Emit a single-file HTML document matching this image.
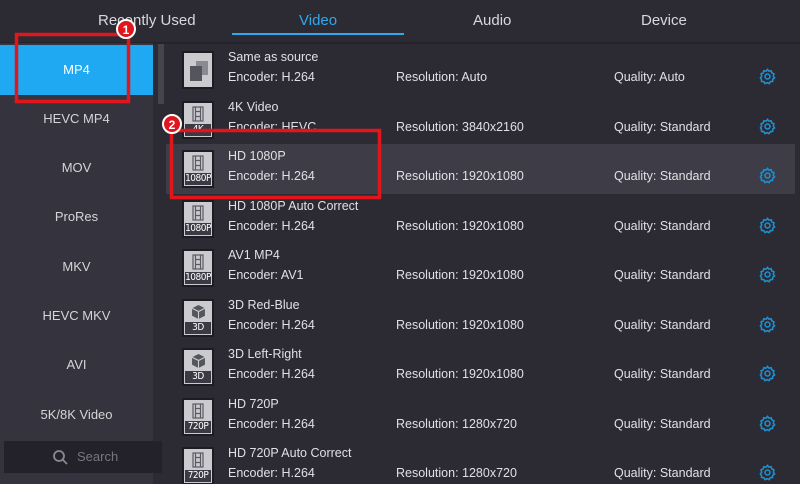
<!DOCTYPE html><html><head><style>
*{margin:0;padding:0;box-sizing:border-box}
html,body{width:800px;height:484px;overflow:hidden}
body{background:#2c2b34;font-family:"Liberation Sans","DejaVu Sans",sans-serif;color:#dcdce0;position:relative}
.tab{position:absolute;top:12px;font-size:15px;color:#d8d8dc}
.side{position:absolute;left:0;top:43px;width:153px;height:441px;background:#35343e}
.si{position:absolute;left:0;width:153px;height:50px;line-height:50px;text-align:center;font-size:13px;color:#d4d4d8}
.row{position:absolute;left:166px;width:629px;height:49.5px}
.ic{position:absolute;left:16px;top:6px;width:32px;height:38px;background:#cbcbcf;border:2px solid #1c1c22}
.lb{position:absolute;left:1px;right:1px;bottom:1px;height:12px;background:#3b3a44;color:#fff;font-size:10px;line-height:12px;text-align:center;font-family:"DejaVu Sans Condensed","Liberation Sans",sans-serif;letter-spacing:-0.5px}
.t{position:absolute;font-size:12.5px;color:#e0e0e4}
.g{position:absolute;left:593px}
</style></head><body>
<div class="tab" style="left:98px">Recently Used</div>
<div class="tab" style="left:299px;color:#2fa8ec">Video</div>
<div style="position:absolute;left:232px;top:33px;width:172px;height:2px;background:#2fa8ec"></div>
<div class="tab" style="left:473px">Audio</div>
<div class="tab" style="left:641px">Device</div>
<div style="position:absolute;left:0;top:42px;width:800px;height:2px;background:#24232a"></div>
<div class="side">
<div class="si" style="top:2px;background:#1fa9f2;color:#fff">MP4</div>
<div class="si" style="top:51px">HEVC MP4</div>
<div class="si" style="top:100px">MOV</div>
<div class="si" style="top:149px">ProRes</div>
<div class="si" style="top:199px">MKV</div>
<div class="si" style="top:248px">HEVC MKV</div>
<div class="si" style="top:297px">AVI</div>
<div class="si" style="top:347px">5K/8K Video</div>
<div style="position:absolute;left:4px;top:398px;width:158px;height:32px;background:#23222a;color:#77767e;font-size:13px;line-height:32px"><svg style="position:absolute;left:48px;top:8px" width="16" height="16" viewBox="0 0 16 16" fill="none" stroke="#8a8990" stroke-width="1.8"><circle cx="7" cy="7" r="5"/><path d="M11 11l4 4"/></svg><span style="position:absolute;left:73px">Search</span></div>
</div>
<div style="position:absolute;left:158px;top:44px;width:6px;height:60px;background:#45444d"></div>
<div id="rows"></div>
<svg style="position:absolute;left:0;top:0" width="800" height="484">
<rect x="16.5" y="34.5" width="112" height="67" fill="none" stroke="#e0161c" stroke-width="3.5"/>
<rect x="171.5" y="130.5" width="208" height="67" fill="none" stroke="#e0161c" stroke-width="3.5"/>
<circle cx="126" cy="29" r="9" fill="#e0161c" stroke="#fff" stroke-width="2"/>
<text x="126" y="34" fill="#fff" font-size="12" font-weight="bold" text-anchor="middle" font-family="Liberation Sans">1</text>
<circle cx="172" cy="124" r="9" fill="#e0161c" stroke="#fff" stroke-width="2"/>
<text x="172" y="129" fill="#fff" font-size="12" font-weight="bold" text-anchor="middle" font-family="Liberation Sans">2</text>
</svg>
<script>
var d=[["Same as source","H.264","Auto","Auto",""],["4K Video","HEVC","3840x2160","Standard","4K"],["HD 1080P","H.264","1920x1080","Standard","1080P"],["HD 1080P Auto Correct","H.264","1920x1080","Standard","1080P"],["AV1 MP4","AV1","1920x1080","Standard","1080P"],["3D Red-Blue","H.264","1920x1080","Standard","3D"],["3D Left-Right","H.264","1920x1080","Standard","3D"],["HD 720P","H.264","1280x720","Standard","720P"],["HD 720P Auto Correct","H.264","1280x720","Standard","720P"]];
var h="";
d.forEach(function(r,i){
var top=45+49.5*i;
var icon;
if(r[4]==""){icon='<svg style="position:absolute;left:4px;top:6px" width="22" height="24"><rect x="8" y="2" width="12" height="14" fill="#8a8a92"/><rect x="2" y="7" width="12" height="15" fill="#55555e"/></svg>';}
else if(r[4]=="3D"){icon='<svg style="position:absolute;left:8px;top:4px" width="13" height="14" viewBox="0 0 12 13"><path d="M6 0L12 3V10L6 13L0 10V3Z" fill="#55555e"/><path d="M0 3L6 6L12 3M6 6V13" stroke="#cbcbcf" stroke-width="1" fill="none"/></svg><div class="lb">3D</div>';}
else{icon='<svg style="position:absolute;left:8px;top:3px" width="12" height="16" viewBox="0 0 12 16" fill="none" stroke="#5a5a63" stroke-width="1.2"><rect x="1" y="1" width="10" height="14"/><path d="M3.5 1V15M8.5 1V15M3.5 5.5H8.5M3.5 10.5H8.5"/></svg><div class="lb">'+r[4]+'</div>';}
h+='<div class="row" style="top:'+top+'px;'+(i==2?'background:#3d3c47':'')+'"><div class="ic">'+icon+'</div>'+
'<div class="t" style="left:62px;top:5px">'+r[0]+'</div>'+
'<div class="t" style="left:62px;top:25px">Encoder: '+r[1]+'</div>'+
'<div class="t" style="left:230px;top:25px">Resolution: '+r[2]+'</div>'+
'<div class="t" style="left:448px;top:25px">Quality: '+r[3]+'</div>'+
'<svg class="g" style="top:23px" width="17" height="17" viewBox="0 0 24 24" fill="none" stroke="#1e90d0" stroke-width="2.2"><path d="M12 2l2 2.5 3.2-.6.9 3.1 3 1.3-.9 3.1 1.8 2.6-2.6 1.8-.2 3.2-3.2.3-1.7 2.7-2.9-1.3-2.9 1.3-1.7-2.7-3.2-.3-.2-3.2L2 14l1.8-2.6L2.9 8.3l3-1.3.9-3.1L10 4.5z"/><circle cx="12" cy="12" r="3.5"/></svg></div>';
});
document.getElementById("rows").innerHTML=h;
</script>
</body></html>
